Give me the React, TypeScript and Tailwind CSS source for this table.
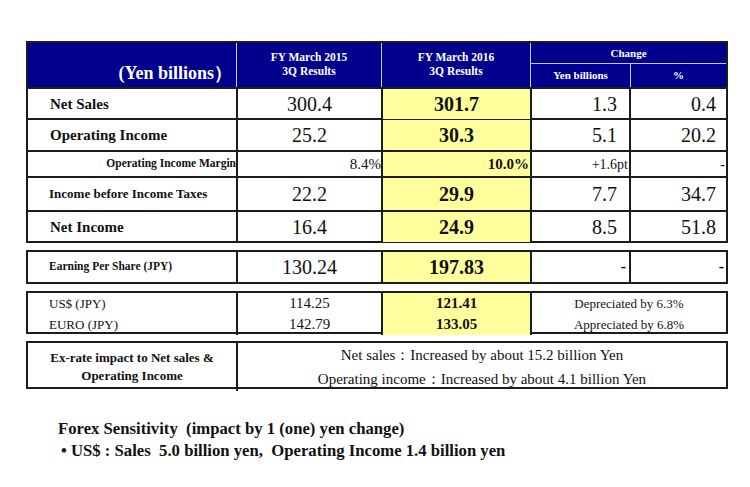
import React from 'react';

const grid = 'grid grid-cols-[208px_145px_149px_99px_97px]';
const yellow = 'bg-[#ffff9e]';

type Row = {
  label: string;
  labelClass: string;
  h: string;
  a: string;
  b: string;
  c: string;
  d: string;
  small?: boolean;
};

const rows: Row[] = [
  { label: 'Net Sales', labelClass: 'pl-[22px] text-[15px] font-bold', h: 'h-[31px]', a: '300.4', b: '301.7', c: '1.3', d: '0.4' },
  { label: 'Operating Income', labelClass: 'pl-[22px] text-[15px] font-bold', h: 'h-[32px]', a: '25.2', b: '30.3', c: '5.1', d: '20.2' },
  { label: 'Operating Income Margin', labelClass: 'justify-end text-[11.5px] font-bold', h: 'h-[26px]', a: '8.4%', b: '10.0%', c: '+1.6pt', d: '-', small: true },
  { label: 'Income before Income Taxes', labelClass: 'pl-[21px] text-[13px] font-bold', h: 'h-[34px]', a: '22.2', b: '29.9', c: '7.7', d: '34.7' },
  { label: 'Net Income', labelClass: 'pl-[22px] text-[15px] font-bold', h: 'h-[31px]', a: '16.4', b: '24.9', c: '8.5', d: '51.8' },
];

const App: React.FC = () => {
  return (
    <div className="w-[750px] h-[487px] bg-white text-[#111] [font-family:'Liberation_Serif',serif] pt-[41px] pl-[26px]">
      <div className="w-[702px] flex flex-col gap-[7px]">
        {/* Main results table */}
        <div className="border-2 border-[#1c1c1c]">
          <div className={`${grid} h-[44px] bg-[#00008c] text-white font-bold`}>
            <div className="flex items-end justify-end pr-[4px] pb-[0px] text-[18px]">(Yen billions）</div>
            <div className="border-l border-[#c8c8ff] flex flex-col items-center pt-[7px] text-[11.5px] leading-[14px]">
              <span>FY March 2015</span>
              <span>3Q Results</span>
            </div>
            <div className="border-l border-[#c8c8ff] flex flex-col items-center pt-[7px] text-[11.5px] leading-[14px]">
              <span>FY March 2016</span>
              <span>3Q Results</span>
            </div>
            <div className="col-span-2 border-l border-[#c8c8ff] flex flex-col text-[11px]">
              <div className="h-[21px] flex items-center justify-center border-b border-[#c8c8ff]">Change</div>
              <div className="flex-1 grid grid-cols-[99px_96px]">
                <div className="flex items-center justify-center">Yen billions</div>
                <div className="border-l border-[#c8c8ff] flex items-center justify-center">%</div>
              </div>
            </div>
          </div>
          {rows.map((r) => (
            <div key={r.label} className={`${grid} ${r.h} border-t-2 border-[#1c1c1c]`}>
              <div className={`flex items-center ${r.labelClass}`}>{r.label}</div>
              <div className={`border-l-2 border-[#1c1c1c] flex items-center ${r.small ? 'justify-end text-[15px]' : 'justify-center text-[20px]'}`}>{r.a}</div>
              <div className={`border-l-2 border-[#1c1c1c] ${yellow} flex items-center font-bold ${r.small ? 'justify-end pr-[1px] text-[15px]' : 'justify-center text-[20px]'}`}>{r.b}</div>
              <div className={`border-l-2 border-[#1c1c1c] flex items-center justify-end ${r.small ? 'pr-[1px] text-[14px]' : 'pr-[12px] text-[20px]'}`}>{r.c}</div>
              <div className={`border-l-2 border-[#1c1c1c] flex items-center justify-end ${r.small ? 'pr-[1px] text-[14px]' : 'pr-[10px] text-[20px]'}`}>{r.d}</div>
            </div>
          ))}
        </div>

        {/* EPS */}
        <div className={`${grid} h-[34px] border-2 border-[#1c1c1c]`}>
          <div className="flex items-center pl-[21px] text-[11.5px] font-bold">Earning Per Share (JPY)</div>
          <div className="border-l-2 border-[#1c1c1c] flex items-center justify-center text-[20px]">130.24</div>
          <div className={`border-l-2 border-[#1c1c1c] ${yellow} flex items-center justify-center text-[20px] font-bold`}>197.83</div>
          <div className="border-l-2 border-[#1c1c1c] flex items-center justify-end pr-[3px] text-[16px] font-bold">-</div>
          <div className="border-l-2 border-[#1c1c1c] flex items-center justify-end pr-[2px] text-[16px] font-bold">-</div>
        </div>

        {/* Exchange rates */}
        <div className={`${grid} h-[43px] border-2 border-[#1c1c1c]`}>
          <div className="flex flex-col justify-center pl-[21px] text-[13px] leading-[21px]">
            <span>US$ (JPY)</span>
            <span>EURO (JPY)</span>
          </div>
          <div className="border-l-2 border-[#1c1c1c] flex flex-col items-center justify-center text-[15px] leading-[21px]">
            <span>114.25</span>
            <span>142.79</span>
          </div>
          <div className={`border-l-2 border-[#1c1c1c] ${yellow} flex flex-col items-center justify-center text-[15px] font-bold leading-[21px]`}>
            <span>121.41</span>
            <span>133.05</span>
          </div>
          <div className="col-span-2 border-l-2 border-[#1c1c1c] flex flex-col items-center justify-center text-[13px] leading-[21px]">
            <span>Depreciated by 6.3%</span>
            <span>Appreciated by 6.8%</span>
          </div>
        </div>

        {/* Ex-rate impact */}
        <div className={`${grid} h-[48px] border-2 border-[#1c1c1c]`}>
          <div className="flex flex-col items-center justify-center text-[13px] font-bold leading-[18px]">
            <span>Ex-rate impact to Net sales &amp;</span>
            <span>Operating Income</span>
          </div>
          <div className="col-span-4 border-l-2 border-[#1c1c1c] flex flex-col items-center justify-center text-[15px] leading-[24px]">
            <span>Net sales：Increased by about 15.2 billion Yen</span>
            <span>Operating income：Increased by about 4.1 billion Yen</span>
          </div>
        </div>
      </div>

      <div className="mt-[29px] pl-[32px] text-[16.7px] font-bold leading-[22px] whitespace-pre">
        <div>Forex Sensitivity  (impact by 1 (one) yen change)</div>
        <div className="pl-[3px]">• US$ : Sales  5.0 billion yen,  Operating Income 1.4 billion yen</div>
      </div>
    </div>
  );
};

export default App;
